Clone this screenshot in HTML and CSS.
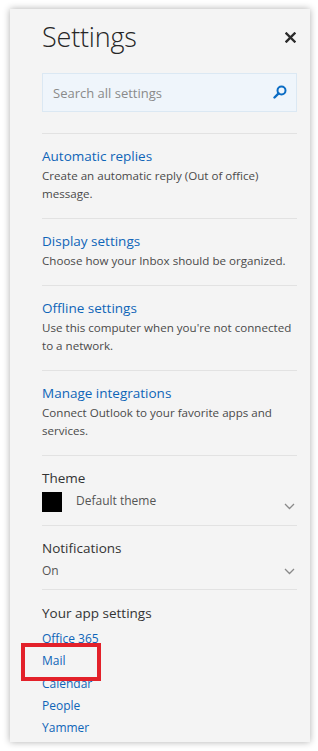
FILE: index.html
```html
<!DOCTYPE html>
<html>
<head>
<meta charset="utf-8">
<link rel="stylesheet" href="styles.css">
</head>
<body>
<div class="panel">
  <div class="header">
    <h1 class="title">Settings</h1>
    <svg class="close" width="11" height="11" viewBox="0 0 11 11"><path d="M1.5 1.5 L9.5 9.5 M9.5 1.5 L1.5 9.5" stroke="#2b2b2b" stroke-width="2.4" stroke-linecap="square"/></svg>
  </div>
  <div class="search">
    <span class="placeholder">Search all settings</span>
    <svg class="search-icon" width="14" height="14" viewBox="0 0 14 14"><circle cx="8.5" cy="5.5" r="4" fill="none" stroke="#0a6cc4" stroke-width="2"/><path d="M5.6 8.4 L1.5 12.5" stroke="#0a6cc4" stroke-width="2.4" stroke-linecap="round"/></svg>
  </div>
  <div class="sections">
    <div class="section">
      <div class="link-title">Automatic replies</div>
      <div class="desc">Create an automatic reply (Out of office) message.</div>
    </div>
    <div class="section">
      <div class="link-title">Display settings</div>
      <div class="desc">Choose how your Inbox should be organized.</div>
    </div>
    <div class="section">
      <div class="link-title">Offline settings</div>
      <div class="desc">Use this computer when you're not connected to a network.</div>
    </div>
    <div class="section">
      <div class="link-title">Manage integrations</div>
      <div class="desc">Connect Outlook to your favorite apps and services.</div>
    </div>
    <div class="section section-theme">
      <div class="heading">Theme</div>
      <div class="select-row">
        <span class="swatch"></span>
        <span class="select-value indent">Default theme</span>
        <svg class="chevron chevron-low" width="11" height="7" viewBox="0 0 11 7"><path d="M1 1 L5.5 5.5 L10 1" fill="none" stroke="#8a8a8a" stroke-width="1.3"/></svg>
      </div>
    </div>
    <div class="section section-notif">
      <div class="heading">Notifications</div>
      <div class="select-row">
        <span class="select-value">On</span>
        <svg class="chevron" width="11" height="7" viewBox="0 0 11 7"><path d="M1 1 L5.5 5.5 L10 1" fill="none" stroke="#8a8a8a" stroke-width="1.3"/></svg>
      </div>
    </div>
    <div class="section section-apps">
      <div class="heading">Your app settings</div>
      <ul class="app-links">
        <li>Office 365</li>
        <li>Mail</li>
        <li>Calendar</li>
        <li>People</li>
        <li>Yammer</li>
      </ul>
    </div>
  </div>
  <div class="highlight"></div>
</div>
</body>
</html>
```

FILE: styles.css
```css
* { box-sizing: border-box; }
html, body { margin: 0; padding: 0; background: #ffffff; }
body {
  font-family: "Open Sans", "Noto Sans", sans-serif;
  width: 318px;
  height: 751px;
  overflow: hidden;
}
.panel {
  position: relative;
  margin: 9px 0 0 10px;
  width: 300px;
  height: 733px;
  background: #f4f4f4;
  box-shadow: 0 0 7px rgba(0, 0, 0, 0.32);
  padding: 0 13px 0 32px;
}
.header {
  display: flex;
  align-items: center;
  justify-content: space-between;
  padding-top: 1px;
  height: 55px;
}
.title {
  margin: 0;
  font-weight: 300;
  font-size: 27px;
  line-height: 38px;
  color: #262626;
  letter-spacing: -0.2px;
}
.close { margin-right: 1px; }
.search {
  margin-top: 9px;
  height: 39px;
  background: #eff5fb;
  border: 1px solid #dbe8f3;
  display: flex;
  align-items: center;
  justify-content: space-between;
  padding: 0 9px 0 10px;
}
.placeholder {
  font-size: 13px;
  color: #8a8a8a;
}
.search-icon { margin-top: -2px; }
.sections { margin-top: 21px; }
.section {
  border-top: 1px solid #e2e2e2;
  padding: 12px 0 15px;
}
.link-title {
  font-size: 13.5px;
  line-height: 20px;
  color: #0f65b8;
}
.desc {
  margin-top: 1px;
  font-size: 11.6px;
  line-height: 18px;
  color: #4a4a4a;
}
.heading {
  font-size: 13.5px;
  line-height: 20px;
  color: #333333;
}
.select-row {
  display: flex;
  align-items: flex-start;
  position: relative;
}
.section-theme { padding-bottom: 13px; }
.section-theme .select-row { margin-top: 4px; height: 20px; }
.swatch {
  width: 20px;
  height: 20px;
  background: #000000;
  flex: none;
}
.select-value {
  font-size: 12px;
  line-height: 18px;
  color: #555555;
}
.select-value.indent { margin-left: 14px; margin-top: 0; }
.chevron { margin-left: auto; margin-right: 2px; margin-top: 6px; }
.chevron-low { margin-top: 11px; }
.section-notif { padding-bottom: 9px; }
.section-notif .select-row { margin-top: 4px; }
.section-apps { padding-top: 13px; }
.app-links {
  list-style: none;
  margin: 5px 0 0;
  padding: 0;
}
.app-links li {
  font-size: 12px;
  line-height: 22.3px;
  color: #0f65b8;
}
.highlight {
  position: absolute;
  left: 11px;
  top: 634px;
  width: 80px;
  height: 38px;
  border: 4px solid #e3212a;
}
```
